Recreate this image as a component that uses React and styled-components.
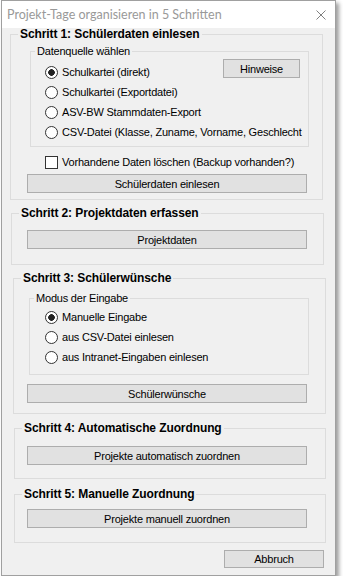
import React from 'react';
import styled, { createGlobalStyle } from 'styled-components';

const Global = createGlobalStyle`
  html, body { margin: 0; padding: 0; background: #ffffff; }
  body { font-family: "Liberation Sans", Arial, sans-serif; }
`;

const Window = styled.div`
  box-sizing: border-box;
  margin-left: 1px;
  width: 335px;
  height: 576px;
  border: 1px solid #a0a0a0;
  background: #f0f0f0;
  box-shadow: 3px 3px 4px rgba(0, 0, 0, 0.38);
  display: flex;
  flex-direction: column;
`;

const TitleBar = styled.div`
  height: 27px;
  flex: none;
  background: #ffffff;
  display: flex;
  align-items: center;
  justify-content: space-between;
  padding: 0 9px 0 5px;
`;

const Title = styled.span`
  font: 12.5px "Lato", "Noto Sans", sans-serif;
  color: #999999;
`;

const Body = styled.div`
  flex: 1;
  display: flex;
  flex-direction: column;
  align-items: flex-start;
  font-size: 11px;
  letter-spacing: -0.2px;
  color: #000000;
`;

const Group = styled.fieldset`
  --cl: ${p => p.$x + 1}px;
  box-sizing: border-box;
  min-width: 0;
  margin: ${p => p.$mt}px 0 0 ${p => p.$x - 2}px;
  width: ${p => p.$w}px;
  padding: 0 0 ${p => p.$pb}px 0;
  border: 1px solid #dcdcdc;
  display: flex;
  flex-direction: column;
  align-items: flex-start;
`;

const StepTitle = styled.legend`
  margin-left: 7px;
  padding: 0 2px;
  font: bold 12px/13px "Liberation Sans", Arial, sans-serif;
  letter-spacing: -0.1px;
`;

const SubGroup = styled.fieldset`
  box-sizing: border-box;
  min-width: 0;
  margin: ${p => p.$mt}px 0 0 calc(${p => p.$x}px - var(--cl));
  width: ${p => p.$w}px;
  padding: ${p => p.$pt}px 8px ${p => p.$pb}px ${p => p.$pl}px;
  border: 1px solid #dcdcdc;
  display: flex;
  flex-direction: column;
`;

const SubTitle = styled.legend`
  margin-left: ${p => 4 - p.$shift}px;
  padding: 0 2px;
  font: 11px/13px "Liberation Sans", Arial, sans-serif;
  letter-spacing: -0.2px;
`;

const HeadRow = styled.div`
  display: flex;
  justify-content: space-between;
  align-items: flex-start;
`;

const Option = styled.label`
  display: flex;
  align-items: center;
  gap: 4px;
  height: 20px;
  margin-top: ${p => p.$mt || 0}px;
  white-space: nowrap;
`;

const Radio = styled.input.attrs({ type: 'radio' })`
  appearance: none;
  margin: 0;
  width: 13px;
  height: 13px;
  flex: none;
  box-sizing: border-box;
  border: 1px solid #333333;
  border-radius: 50%;
  background: #ffffff;
  &:checked {
    background: radial-gradient(circle, #222222 0 3px, #ffffff 3.6px);
  }
`;

const Check = styled.input.attrs({ type: 'checkbox' })`
  appearance: none;
  margin: 0;
  width: 13px;
  height: 13px;
  flex: none;
  box-sizing: border-box;
  border: 1px solid #333333;
  background: #ffffff;
`;

const CheckRow = styled.label`
  display: flex;
  align-items: center;
  gap: 4px;
  height: 18px;
  margin: 6px 0 0 calc(45px - var(--cl));
  white-space: nowrap;
`;

const Button = styled.button`
  box-sizing: border-box;
  flex: none;
  height: ${p => p.$h || 19}px;
  width: ${p => p.$w}px;
  padding: 0;
  background: #e1e1e1;
  border: 1px solid #adadad;
  border-radius: 0;
  font: 11px "Liberation Sans", Arial, sans-serif;
  letter-spacing: -0.2px;
  color: #000000;
`;

const StepButton = styled(Button)`
  margin: ${p => p.$mt}px 0 0 calc(27px - var(--cl));
`;

const CancelButton = styled(Button)`
  align-self: flex-end;
  margin: 7px 11px 0 0;
`;

const CloseIcon = () => (
  <svg width="10" height="10" viewBox="0 0 10 10">
    <path d="M0.5 0.5 L9.5 9.5 M9.5 0.5 L0.5 9.5" stroke="#808080" strokeWidth="1" fill="none" />
  </svg>
);

export default function App() {
  return (
    <>
      <Global />
      <Window>
        <TitleBar>
          <Title>Projekt-Tage organisieren in 5 Schritten</Title>
          <CloseIcon />
        </TitleBar>
        <Body>
          <Group $x={10} $w={313} $mt={0} $pb={6}>
            <StepTitle>Schritt 1: Schülerdaten einlesen</StepTitle>
            <SubGroup $x={30} $w={279} $mt={4} $pt={1} $pb={4} $pl={14}>
              <SubTitle $shift={14}>Datenquelle wählen</SubTitle>
              <HeadRow>
                <Option $mt={3}><Radio name="src" defaultChecked />Schulkartei (direkt)</Option>
                <Button $w={77}>Hinweise</Button>
              </HeadRow>
              <Option><Radio name="src" />Schulkartei (Exportdatei)</Option>
              <Option><Radio name="src" />ASV-BW Stammdaten-Export</Option>
              <Option><Radio name="src" />CSV-Datei (Klasse, Zuname, Vorname, Geschlecht</Option>
            </SubGroup>
            <CheckRow><Check />Vorhandene Daten löschen (Backup vorhanden?)</CheckRow>
            <StepButton $w={280} $mt={3}>Schülerdaten einlesen</StepButton>
          </Group>

          <Group $x={11} $w={313} $mt={7} $pb={15}>
            <StepTitle>Schritt 2: Projektdaten erfassen</StepTitle>
            <StepButton $w={280} $mt={10}>Projektdaten</StepButton>
          </Group>

          <Group $x={13} $w={313} $mt={7} $pb={10}>
            <StepTitle>Schritt 3: Schülerwünsche</StepTitle>
            <SubGroup $x={29} $w={280} $mt={7} $pt={2} $pb={7} $pl={15}>
              <SubTitle $shift={15}>Modus der Eingabe</SubTitle>
              <Option><Radio name="mode" defaultChecked />Manuelle Eingabe</Option>
              <Option><Radio name="mode" />aus CSV-Datei einlesen</Option>
              <Option><Radio name="mode" />aus Intranet-Eingaben einlesen</Option>
            </SubGroup>
            <StepButton $w={280} $mt={9}>Schülerwünsche</StepButton>
          </Group>

          <Group $x={14} $w={312} $mt={8} $pb={13}>
            <StepTitle>Schritt 4: Automatische Zuordnung</StepTitle>
            <StepButton $w={280} $mt={11}>Projekte automatisch zuordnen</StepButton>
          </Group>

          <Group $x={14} $w={312} $mt={9} $pb={14}>
            <StepTitle>Schritt 5: Manuelle Zuordnung</StepTitle>
            <StepButton $w={280} $mt={8}>Projekte manuell zuordnen</StepButton>
          </Group>

          <CancelButton $w={100} $h={18}>Abbruch</CancelButton>
        </Body>
      </Window>
    </>
  );
}
